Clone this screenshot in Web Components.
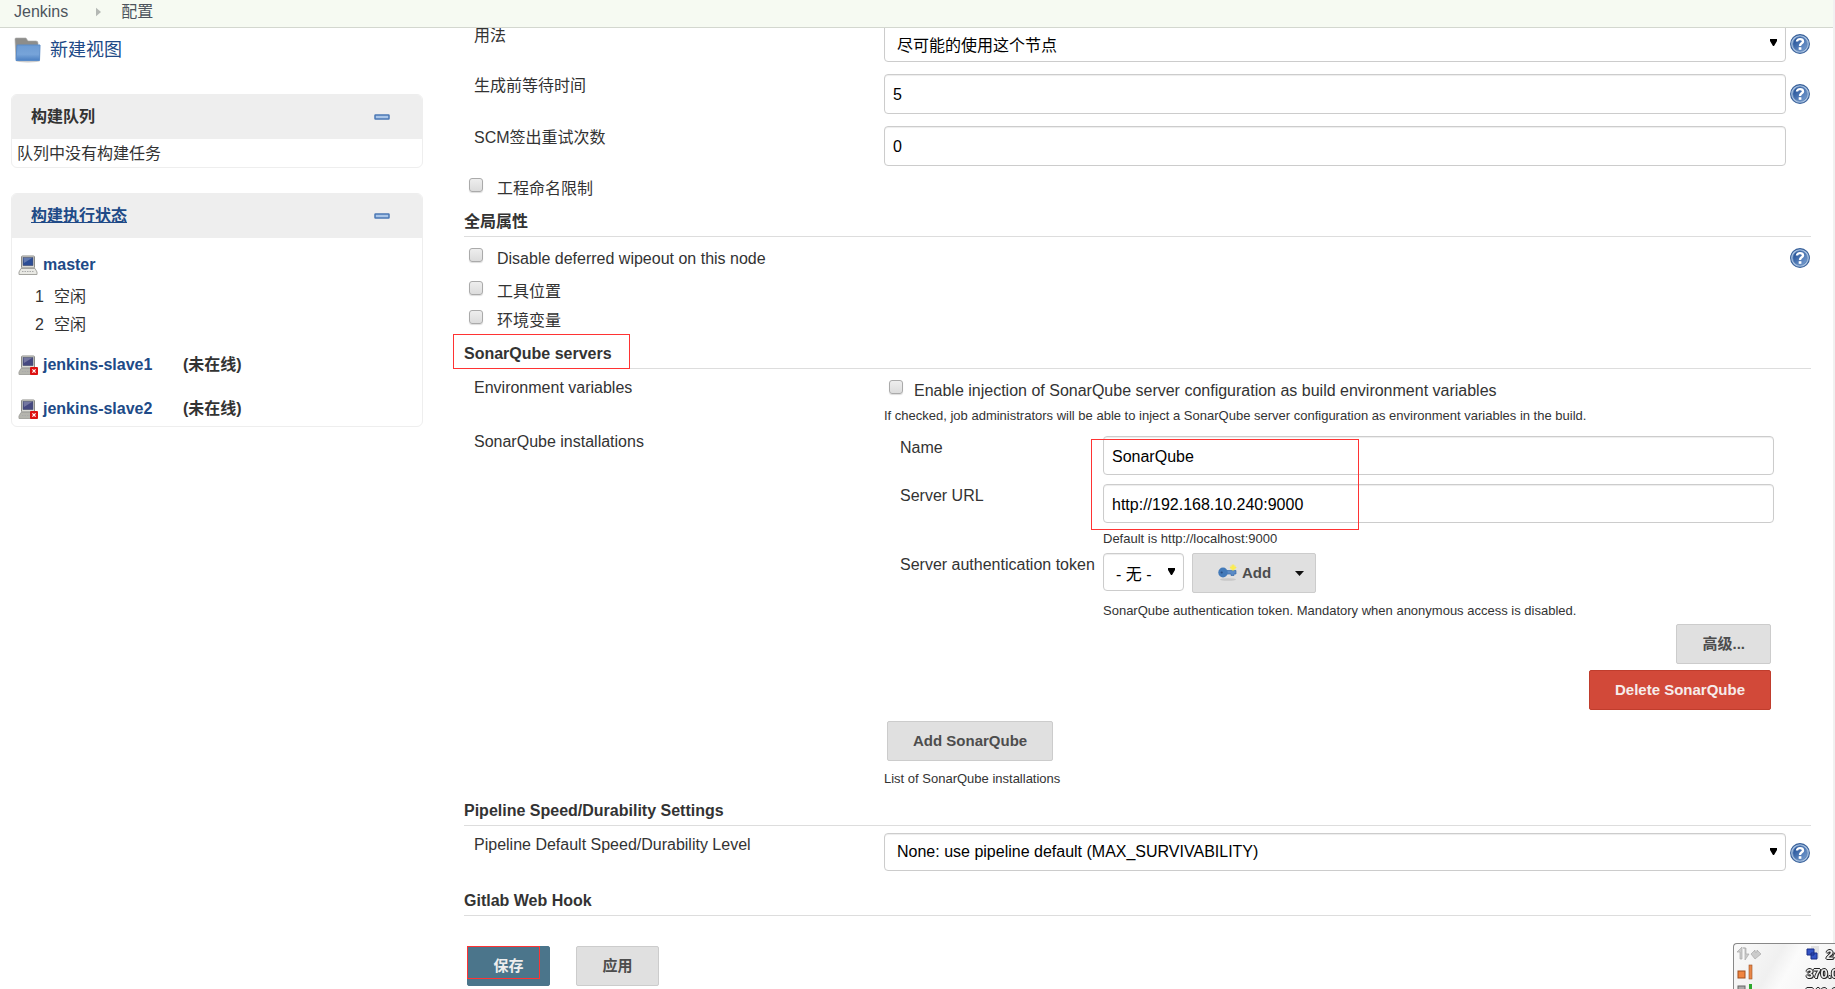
<!DOCTYPE html>
<html lang="zh-CN">
<head>
<meta charset="utf-8">
<title>配置 [Jenkins]</title>
<style>
html{height:100%}
body{margin:0;box-sizing:border-box;height:100%;border-right:2px solid #f1f1f1;background:#fff;color:#333;font:16px/22px "Liberation Sans","Noto Sans CJK SC",sans-serif}
</style>
</head>
<body>
<jenkins-page></jenkins-page>
<script>
function element(name, html) {
  const template = document.createElement('template');
  template.innerHTML = html;
  customElements.define(name, class extends HTMLElement {
    constructor() {
      super();
      this.attachShadow({mode: 'open'}).append(template.content.cloneNode(true));
    }
  });
}

element('crumb-bar', `<style>
:host{display:block;box-sizing:border-box;flex:0 0 28px;background:#f6faf2;border-bottom:1px solid #d3d7cf}
nav{display:flex;align-items:center;padding:0 14px;height:24px}
a{color:#4d545d;text-decoration:none}
svg{width:5px;height:10px;fill:#b4b8b4;margin:0 20px 0 28px}
</style>
<nav><a href="#">Jenkins</a><svg viewBox="0 0 6 10"><path d="M0 0L6 5L0 10z"/></svg><a href="#">配置</a></nav>`);

element('help-icon', `<style>
:host{display:block;width:20px;height:20px}
button{display:block;padding:0;border:0;background:none;width:20px;height:20px}
</style>
<button type="button" aria-label="帮助"><svg width="20" height="20" viewBox="0 0 20 20">
<defs><linearGradient id="g" x1="0" y1="0" x2="1" y2="1"><stop offset="0" stop-color="#16458f"/><stop offset="1" stop-color="#7fa5d6"/></linearGradient></defs>
<circle cx="10" cy="10" r="9.4" fill="#a9c2e2" stroke="#386099" stroke-width="1.1"/><circle cx="10" cy="10" r="7.2" fill="url(#g)" stroke="#5a81b5" stroke-width=".8"/>
<path d="M7 7.4C7 4.4 13 4.4 13 7.4C13 9.4 10 9.3 10 11.9" fill="none" stroke="#fff" stroke-width="2.4"/><rect x="8.7" y="13.2" width="2.7" height="2.6" fill="#fff"/></svg></button>`);

element('node-icon', `<style>
:host{display:block;width:20px;height:20px}
.x{display:none}:host([offline]) .x{display:block}:host([offline]) .scr{fill:#454880}:host([offline]) .kb{fill:#b5b5ae}
</style>
<svg width="20" height="20" viewBox="0 0 20 20"><rect x="3.5" y="1" width="13" height="12" rx="1" fill="#dcdcd6" stroke="#8b8b86"/>
<rect class="scr" x="5" y="2.6" width="10" height="8" fill="#2c4d95" stroke="#4b5370" stroke-width=".6"/><path d="M5.5 3H14L6 8z" fill="#fff" opacity=".25"/>
<path class="kb" d="M3 13.5H17L19 17V19.5H1V17z" fill="#e9e9e4" stroke="#a5a5a0"/><path d="M4 16.5H16" stroke="#aaa" stroke-dasharray="1.5 1"/>
<g class="x"><rect x="12" y="12" width="8" height="8" rx="1" fill="#d11"/><path d="M14.4 14.4L17.6 17.6M17.6 14.4L14.4 17.6" stroke="#fff" stroke-width="1.2"/></g></svg>`);

element('side-panel', `<style>
:host{display:block;border:1px solid #eee;border-radius:6px;overflow:hidden}
header{display:flex;align-items:center;justify-content:space-between;background:#eee;height:44px;padding:0 32px 0 19px;font-weight:700}
button{padding:0;border:0;background:none;width:16px;height:6px;display:block}
svg{display:block}
</style>
<header><slot name="title"></slot><button type="button" aria-label="折叠"><svg width="16" height="6"><rect x="1" y="1" width="14" height="4" rx=".5" fill="#a9c5e8" stroke="#4a77b4" stroke-width="1.5"/></svg></button></header>
<slot></slot>`);

element('side-bar', `<style>
:host{display:block;box-sizing:border-box;flex:0 0 423px;padding:8px 0 0 11px}
a{color:#204a87}
.task{display:flex;align-items:center;gap:9px;height:28px;margin:0 0 30px 3px;font-size:18px;text-decoration:none}
side-panel{margin-bottom:25px}
.empty{padding:4px 5px 2px;height:22px}
ol{list-style:none;margin:0;padding:15px 0 5px 6px}
.node{display:flex;align-items:center;height:24px;font-weight:700}
.node a{text-decoration:none;margin-left:5px;width:140px}
.node+.node,.ex+.node{margin-top:20px}
.ex{display:flex;gap:10px;height:28px;line-height:28px;padding-left:17px}
.node+.ex{margin-top:6px}.ex+.node{margin-top:14px}
</style>
<a class="task" href="#"><svg width="27" height="26" viewBox="0 0 27 26"><defs><linearGradient id="f" x2="0" y2="1"><stop stop-color="#6d9bd3"/><stop offset=".6" stop-color="#77a4d9"/><stop offset="1" stop-color="#4c80c2"/></linearGradient></defs><ellipse cx="14" cy="24" rx="12" ry="1.5" fill="#ccc"/><path d="M1 2Q1 1 2 1H12L14 4H22Q24 4 24 6V22H2z" fill="#8d8d8b" stroke="#aaa" stroke-width=".6"/><path d="M3 8H26L25.5 23.5H2z" fill="url(#f)" stroke="#5b8cc8"/></svg>新建视图</a>
<side-panel><span slot="title">构建队列</span><div class="empty">队列中没有构建任务</div></side-panel>
<side-panel><a slot="title" href="#">构建执行状态</a>
<ol><li class="node"><node-icon></node-icon><a href="#">master</a></li>
<li class="ex"><span>1</span><span>空闲</span></li><li class="ex"><span>2</span><span>空闲</span></li>
<li class="node"><node-icon offline></node-icon><a href="#">jenkins-slave1</a><span>(未在线)</span></li>
<li class="node"><node-icon offline></node-icon><a href="#">jenkins-slave2</a><span>(未在线)</span></li></ol></side-panel>`);

element('form-row', `<style>
:host{display:grid;grid-template-columns:410px minmax(0,1fr) 25px;padding-left:10px;align-items:start}
:host([nested]){grid-template-columns:203px minmax(0,1fr);padding:0 12px 0 16px}
.l{padding-top:1px}
.c{min-width:0}
.h{padding:10px 0 0 4px}
:host([nested]) .h{display:none}
</style>
<div class="l"><slot name="label"></slot></div><div class="c"><slot></slot></div><div class="h"><slot name="help"></slot></div>`);

element('drop-down', `<style>
:host{display:block;position:relative}
svg{position:absolute;right:9px;top:15px;pointer-events:none}
</style><slot></slot><svg width="7" height="8"><path d="M0 0H7V2L4 7H3L0 2z"/></svg>`);

element('section-title', `<style>
:host{display:block;border-bottom:1px solid #ddd;padding-bottom:2px;position:relative}
h2{margin:0;font-size:16px;line-height:24px}
</style><h2><slot></slot></h2>`);

element('check-line', `<style>
:host{display:flex;align-items:flex-start;height:24px;line-height:26px;position:relative}
</style><slot></slot>`);

element('config-form', `<style>
:host{display:flex;flex:1;min-width:0;min-height:0;flex-direction:column}
.scroll{flex:1;min-height:0;overflow:hidden;padding:0 22px 0 41px}
.in{margin-top:-4px}
form-row{margin-top:12px}
.in>form-row:first-child,form-row.t0{margin-top:0}
.t4,form-row.t4{margin-top:4px}
.t5,form-row.t5{margin-top:5px}
.t6{margin-top:6px}
.t7,form-row.t7{margin-top:7px}
.t9,form-row.t9{margin-top:9px}
.t10{margin-top:10px}
.t11{margin-top:11px}
.t18{margin-top:18px}
input[type=text],select{display:block;box-sizing:border-box;width:100%;height:40px;margin:0;border:1px solid #ccc;border-radius:4px;background:#fff;box-shadow:inset 0 1px 1px rgba(0,0,0,.075);color:#000;font:inherit;padding:0 8px;appearance:none}
input[type=text]{padding-top:2px}
select{height:38px;padding:0 12px}
select.cjk{padding-top:5px}
form-row[nested] input[type=text]{height:39px}
input[type=checkbox]{appearance:none;margin:2px 0 0;width:14px;height:14px;flex:none;border:1px solid #aaa;border-radius:3px;background:linear-gradient(#eee,#dcdcdc);box-shadow:0 1px 1px #ddd}
check-line{padding-left:5px}
check-line label{margin-left:14px}
.wide{display:flex;justify-content:space-between}
.wide help-icon{margin:2px 1px 0 0}
.env{padding-top:2px}
.env label{margin-left:11px}
p{margin:0;font-size:13px;line-height:18px}
button{box-sizing:border-box;height:40px;border:1px solid #ccc;border-radius:2px;background:#e0e0e0;color:#4d4d4d;font:700 15px/20px "Liberation Sans","Noto Sans CJK SC",sans-serif;padding:0 25px}
.danger{background:#d24939;border-color:#c03d2d;color:#f6eceb}
.right{display:flex;justify-content:flex-end;padding-right:15px}
.token{display:flex;gap:8px}
.token drop-down{width:81px}
.token button{display:flex;align-items:center;padding:0 11px 0 25px}
.token button span{margin:0 24px 0 4px}
.add{margin-left:3px}
.fields{position:relative}
.mark{position:absolute;border:1px solid #f33;pointer-events:none}
.m1{left:-11px;top:-8px;width:175px;bottom:-1px}
.m2{left:207px;top:3px;width:266px;height:89px}
.m3{left:-1px;top:-1px;width:71px;height:31px}
footer{display:flex;gap:26px;flex:0 0 43px;padding:16px 44px 0}
footer button{width:83px}
.save{position:relative;background:#4b758b;border-color:#4b758b;color:#eee}
</style>
<div class="scroll"><div class="in">
<form-row><label slot="label" for="use">用法</label><drop-down><select class="cjk" id="use"><option>尽可能的使用这个节点</option></select></drop-down><help-icon slot="help"></help-icon></form-row>
<form-row><label slot="label" for="quiet">生成前等待时间</label><input type="text" id="quiet" value="5"><help-icon slot="help"></help-icon></form-row>
<form-row><label slot="label" for="scm">SCM签出重试次数</label><input type="text" id="scm" value="0"></form-row>
<check-line class="t10"><input type="checkbox" id="c1"><label for="c1">工程命名限制</label></check-line>
<section-title class="t10">全局属性</section-title>
<div class="wide t9"><check-line><input type="checkbox" id="c2"><label for="c2">Disable deferred wipeout on this node</label></check-line><help-icon></help-icon></div>
<check-line class="t9"><input type="checkbox" id="c3"><label for="c3">工具位置</label></check-line>
<check-line class="t5"><input type="checkbox" id="c4"><label for="c4">环境变量</label></check-line>
<section-title class="t10">SonarQube servers<span class="mark m1"></span></section-title>
<form-row class="t7"><label slot="label" for="c5">Environment variables</label><check-line class="env"><input type="checkbox" id="c5"><label for="c5">Enable injection of SonarQube server configuration as build environment variables</label></check-line>
<p class="t5">If checked, job administrators will be able to inject a SonarQube server configuration as environment variables in the build.</p></form-row>
<form-row class="t5"><span slot="label">SonarQube installations</span>
<div class="fields t6">
<form-row nested class="t0"><label slot="label" for="name">Name</label><input type="text" id="name" value="SonarQube"></form-row>
<form-row nested class="t9"><label slot="label" for="url">Server URL</label><input type="text" id="url" value="http://192.168.10.240:9000"><p class="t7">Default is http://localhost:9000</p></form-row>
<form-row nested class="t5"><label slot="label" for="token">Server authentication token</label>
<div class="token"><drop-down><select class="cjk" id="token"><option>- 无 -</option></select></drop-down>
<button type="button"><svg width="20" height="18" viewBox="0 0 20 18"><ellipse cx="10" cy="15.5" rx="8" ry="1.3" fill="#c8c8c8"/><path d="M8 6.5H18V10H16V11.5H13V10H8z" fill="#5b8bc6" stroke="#376aa9" stroke-width=".7"/><ellipse cx="5" cy="8.5" rx="4.7" ry="5" fill="#437ab9"/><circle cx="3.7" cy="8.5" r="1.1" fill="#294f85"/><circle cx="15" cy="3.5" r="3" fill="#fbec4f" opacity=".5"/><path d="M15 0L16.3 2.4L19 3.5L16.3 4.7L15 7L13.8 4.7L11.5 3.5L13.8 2.4z" fill="#fbec4f"/></svg><span>Add</span><svg width="9" height="5"><path d="M0 0H9L4.5 5z" fill="#111"/></svg></button></div>
<p class="t9">SonarQube authentication token. Mandatory when anonymous access is disabled.</p></form-row>
<span class="mark m2"></span></div>
<div class="right t4"><button type="button">高级...</button></div>
<div class="right t6"><button type="button" class="danger">Delete SonarQube</button></div>
<button type="button" class="add t11">Add SonarQube</button>
<p class="t9">List of SonarQube installations</p></form-row>
<section-title class="t11">Pipeline Speed/Durability Settings</section-title>
<form-row class="t7"><label slot="label" for="pipe">Pipeline Default Speed/Durability Level</label><drop-down><select id="pipe"><option>None: use pipeline default (MAX_SURVIVABILITY)</option></select></drop-down><help-icon slot="help"></help-icon></form-row>
<section-title class="t18">Gitlab Web Hook</section-title>
</div></div>
<footer><button type="button" class="save">保存<span class="mark m3"></span></button><button type="button">应用</button></footer>`);

element('net-meter', `<style>
:host{position:fixed;right:0;bottom:0;width:102px;height:46px;box-sizing:border-box;overflow:hidden;border:solid #888;border-width:1px 0 0 1px;border-radius:4px 0 0 0;background:linear-gradient(120deg,#fafafa,#f0f0f0 40%,#fbfbfb 55%,#f2f2f2);font:700 13px/19px "Liberation Sans",sans-serif;color:#eee;text-shadow:1px 0 #222,-1px 0 #222,0 1px #222,0 -1px #222,1px 1px #444}
div{display:grid;grid-template-columns:69px 60px;padding:1px 0 0 3px;grid-auto-rows:19px;white-space:nowrap}
svg{display:block}.b{display:flex;gap:6px}
</style><div>
<svg width="26" height="17"><path d="M0 7L5 2V14H3V7zM6 3H8V15L12 9H9V3zM14 9L18 5V7H20V5L24 9L18 14z" fill="#ccc" stroke="#aaa" stroke-width=".7"/></svg><span class="b"><svg width="14" height="17"><path d="M5 1H13V13H5z" fill="#e2e2e2"/><path d="M1 4H8V10H1zM5 8H11V14H5z" fill="#3454c4" stroke="#182d88"/></svg>240</span>
<svg width="18" height="17"><rect x="1" y="7" width="7" height="7" fill="#f0843f" stroke="#a04e1e"/><rect x="12" y="1" width="3" height="14" fill="#e88648" stroke="#9c5023" stroke-width=".6"/></svg><span>370.0</span>
<svg width="18" height="17"><rect x="1" y="3" width="7" height="7" fill="#aaa" stroke="#666"/><rect x="12" y="1" width="3" height="14" fill="#2da72d"/></svg><span>740.0</span></div>`);

element('jenkins-page', `<style>
:host{display:flex;flex-direction:column;height:100%}
main{flex:1;display:flex;min-height:0}
</style><crumb-bar></crumb-bar><main><side-bar></side-bar><config-form></config-form></main><net-meter></net-meter>`);
</script>
</body>
</html>
